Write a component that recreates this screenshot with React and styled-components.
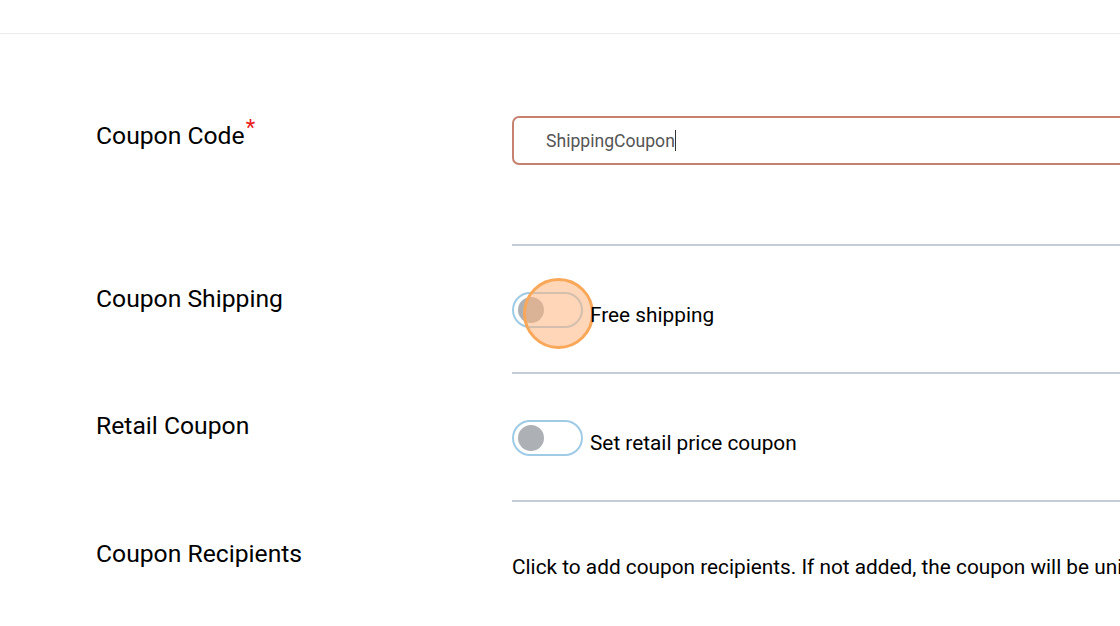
import React from "react";
import styled, { createGlobalStyle } from "styled-components";

const GlobalStyle = createGlobalStyle`
    html, body {
        margin: 0;
        padding: 0;
        background: #fff;
        font-family: Roboto, "Liberation Sans", Arial, sans-serif;
        color: #000;
        overflow: hidden;
    }
`;

export default function App() {
    return (
        <Page>
            <GlobalStyle />
            <TopBar />
            <Form>
                <Row>
                    <Label $top={88}>
                        Coupon Code<Required>*</Required>
                    </Label>
                    <Field $top={82} $height={212}>
                        <Input>
                            <InputText>ShippingCoupon</InputText>
                            <Caret />
                        </Input>
                    </Field>
                </Row>
                <Row>
                    <Label $top={39}>Coupon Shipping</Label>
                    <Field $top={46}>
                        <SwitchLine>
                            <Switch>
                                <Knob />
                                <ClickMark />
                            </Switch>
                            <SwitchText>Free shipping</SwitchText>
                        </SwitchLine>
                    </Field>
                </Row>
                <Row>
                    <Label $top={38}>Retail Coupon</Label>
                    <Field $top={46}>
                        <SwitchLine>
                            <Switch>
                                <Knob />
                            </Switch>
                            <SwitchText>Set retail price coupon</SwitchText>
                        </SwitchLine>
                    </Field>
                </Row>
                <Row>
                    <Label $top={38}>Coupon Recipients</Label>
                    <Field $top={51} $last>
                        <Hint>
                            Click to add coupon recipients. If not added, the coupon will be universal for all customers.
                        </Hint>
                    </Field>
                </Row>
            </Form>
        </Page>
    );
}

const Page = styled.div`
    width: 1120px;
    height: 626px;
    overflow: hidden;
`;
const TopBar = styled.div`
    height: 33px;
    border-bottom: 1px solid #ececec;
`;
const Form = styled.div`
    display: flex;
    flex-direction: column;
`;
const Row = styled.div`
    display: grid;
    grid-template-columns: 416px 1fr;
    padding-left: 96px;
`;
const Label = styled.div`
    padding-top: ${(p) => p.$top}px;
    font-size: 24.7px;
    line-height: 28px;
    white-space: nowrap;
`;
const Required = styled.span`
    color: #e8201a;
    font-size: 22px;
    position: relative;
    top: -9px;
    margin-left: 1px;
`;
const Field = styled.div`
    box-sizing: border-box;
    height: ${(p) => p.$height || 128}px;
    padding-top: ${(p) => p.$top}px;
    border-bottom: ${(p) => (p.$last ? "none" : "2px solid #c3ccd7")};
    min-width: 0;
    white-space: nowrap;
    overflow: hidden;
`;
const Input = styled.div`
    box-sizing: border-box;
    height: 49px;
    width: 700px;
    border: 2px solid #c6826f;
    border-radius: 7px;
    padding-left: 32px;
    display: flex;
    align-items: center;
`;
const InputText = styled.span`
    font-size: 17.6px;
    color: #555;
`;
const Caret = styled.span`
    width: 1px;
    height: 21px;
    background: #333;
`;
const SwitchLine = styled.div`
    display: flex;
    align-items: center;
    gap: 7px;
`;
const Switch = styled.div`
    position: relative;
    box-sizing: border-box;
    width: 71px;
    height: 36px;
    border: 2px solid #9fcbe6;
    border-radius: 18px;
    display: flex;
    align-items: center;
    padding-left: 4px;
    flex-shrink: 0;
`;
const Knob = styled.div`
    width: 26px;
    height: 26px;
    border-radius: 50%;
    background: #adb1b5;
`;
const ClickMark = styled.div`
    position: absolute;
    left: 9px;
    top: -16px;
    box-sizing: border-box;
    width: 71px;
    height: 71px;
    border-radius: 50%;
    border: 3px solid #f9a85a;
    background: rgba(255, 180, 125, 0.55);
`;
const SwitchText = styled.span`
    font-size: 20.8px;
    position: relative;
    top: 5px;
`;
const Hint = styled.div`
    font-size: 20.8px;
    line-height: 28px;
`;
